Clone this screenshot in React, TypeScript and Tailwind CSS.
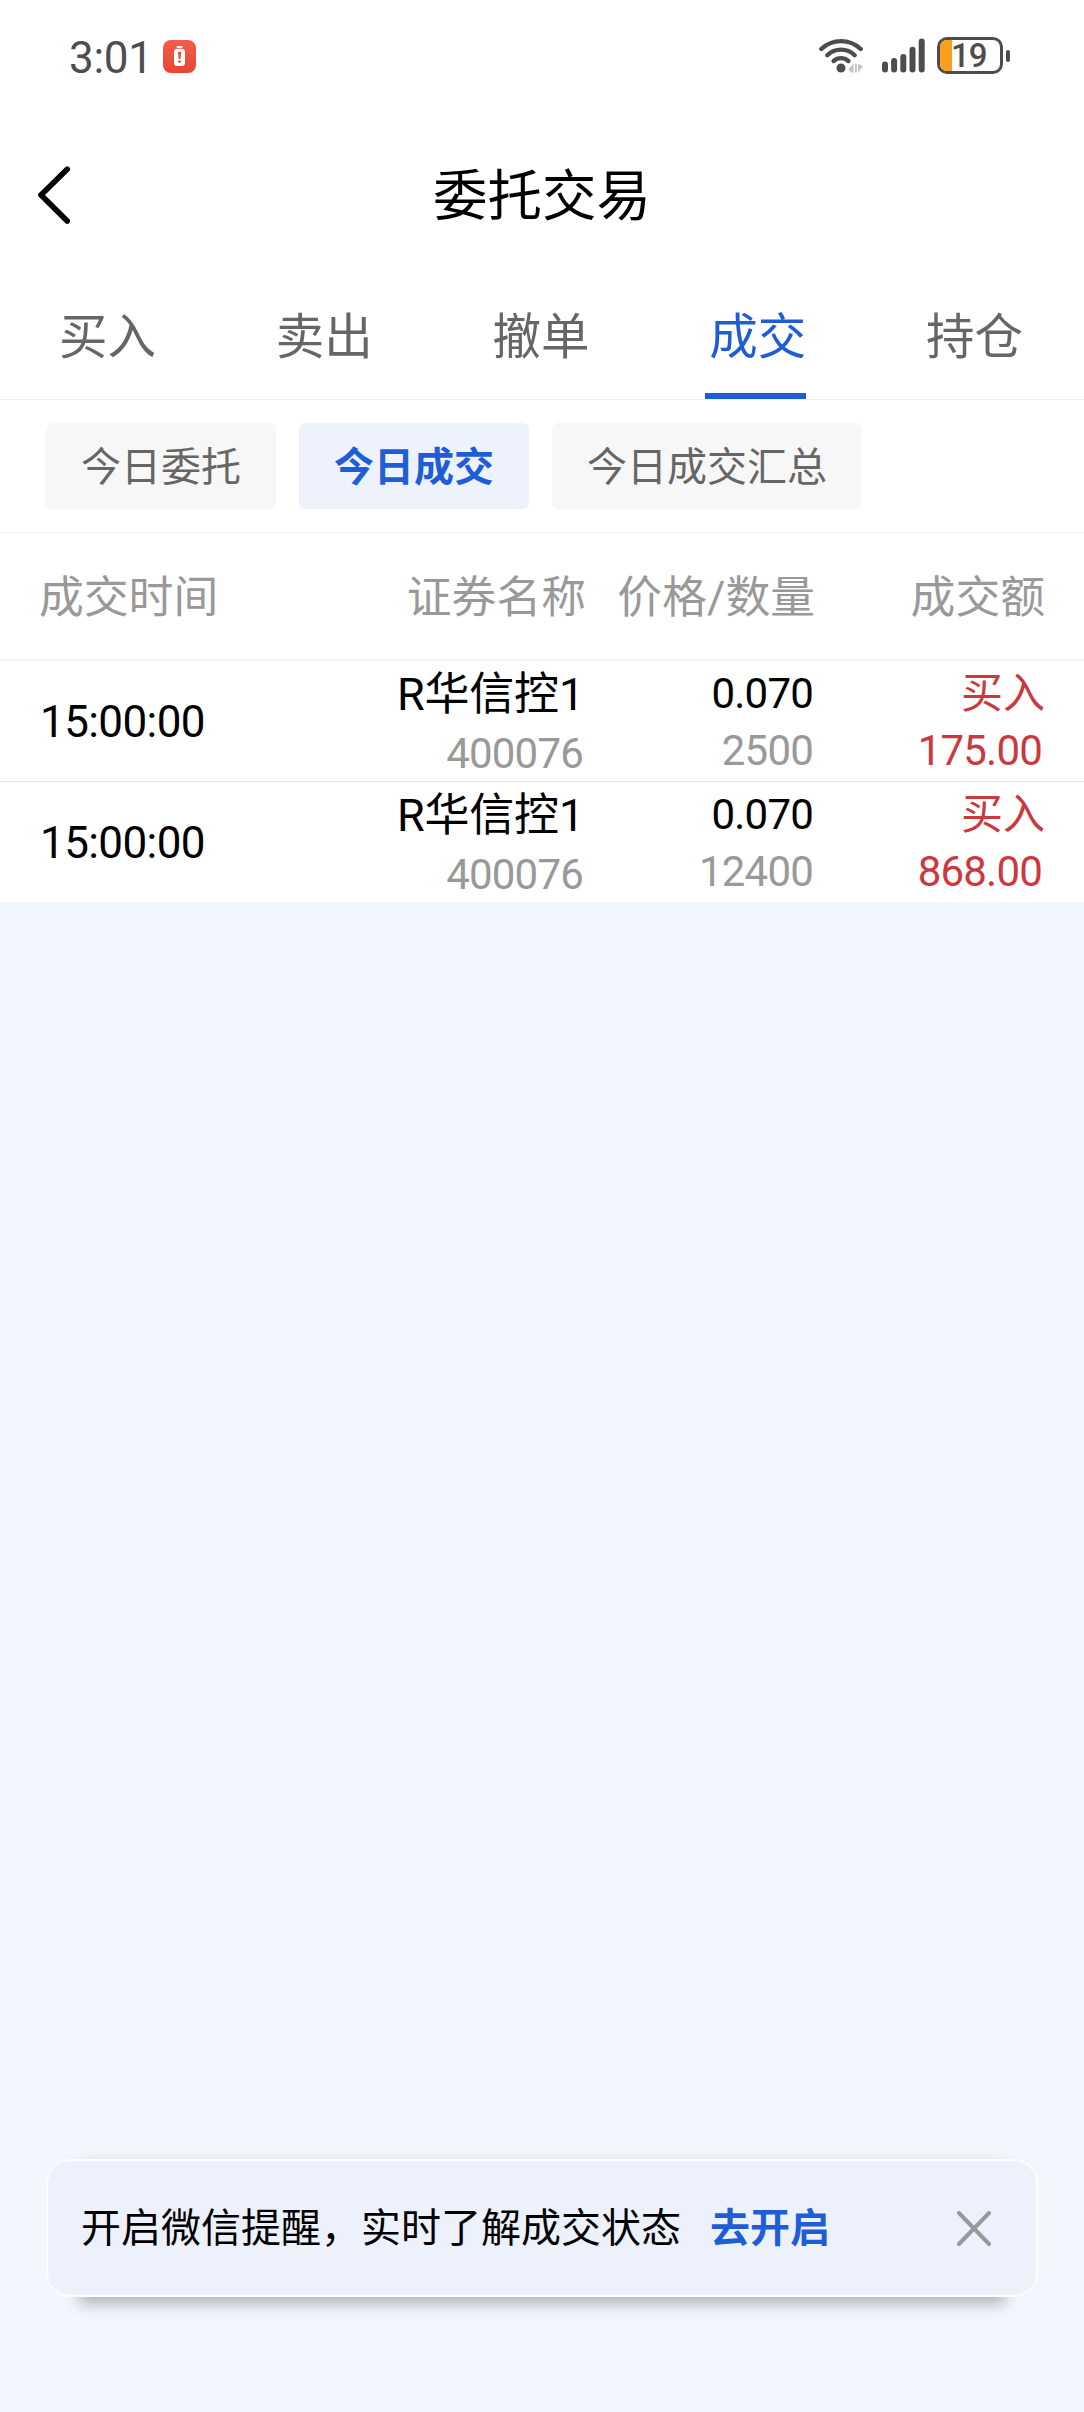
import { clsx } from "clsx";

const tabs = ["买入", "卖出", "撤单", "成交", "持仓"];
const filters = ["今日委托", "今日成交", "今日成交汇总"];

const deals = [
  { time: "15:00:00", name: "R华信控1", code: "400076", price: "0.070", amount: "2500", side: "买入", total: "175.00" },
  { time: "15:00:00", name: "R华信控1", code: "400076", price: "0.070", amount: "12400", side: "买入", total: "868.00" },
];

function StatusBar() {
  return (
    <div className="flex h-[112px] items-start justify-between pl-[69px] pr-[74px] pt-9 text-[#4d4d4d]">
      <div className="flex items-start">
        <span className="h-[44px] w-[94px] text-[44px] leading-[44px] tracking-[-0.3px]">3:01</span>
        <svg className="mt-1" width="33" height="33" viewBox="0 0 33 33">
          <defs>
            <linearGradient id="alert" x1="0" y1="0" x2="0" y2="1">
              <stop offset="0" stopColor="#f05f4c" />
              <stop offset="1" stopColor="#ea4430" />
            </linearGradient>
          </defs>
          <rect width="33" height="33" rx="8" fill="url(#alert)" />
          <rect x="13.8" y="6" width="5.6" height="2.2" rx="0.5" fill="#fff" />
          <rect x="11" y="9" width="11" height="17" rx="3" fill="#fff" />
          <path d="M15 12h3.2l-.7 7h-1.8z" fill="#ea4a36" />
          <circle cx="16.6" cy="21.6" r="1.4" fill="#ea4a36" />
        </svg>
      </div>

      <div className="flex items-start pt-px">
        {/* Wifi */}
        <svg width="45" height="37" viewBox="819 37 45 37" fill="none" stroke="#4d4d4d" strokeWidth="4.4" strokeLinecap="round">
          <path d="M821.3 49a28.5 28.5 0 0 1 39.4 0" />
          <path d="M827.3 55.2a19.5 19.5 0 0 1 27.4 0" />
          <path d="M833.6 61a11 11 0 0 1 14.8 0" />
          <circle cx="841" cy="68" r="4.5" fill="#4d4d4d" stroke="none" />
          <path d="M848.5 69l5-5.3v8.7h-2.4zM855 63.7h1.9v8.7H855zM863 66.5l-5-2.8v8.7z" fill="#c4c4c4" stroke="none" />
        </svg>
        {/* Signal */}
        <svg className="ml-[18px]" width="43" height="37" viewBox="882 37 43 37" fill="#4d4d4d">
          <rect x="882" y="61.5" width="6" height="11" rx="3" />
          <rect x="891.1" y="58" width="6" height="14.5" rx="3" />
          <rect x="900.3" y="54" width="6" height="18.5" rx="3" />
          <rect x="909.5" y="46.8" width="6" height="25.7" rx="3" />
          <rect x="918.7" y="38.4" width="6" height="34.1" rx="3" />
        </svg>
        {/* Battery */}
        <div className="ml-[12px] flex items-center">
          <div className="flex h-[37px] w-[66px] overflow-hidden rounded-[10px] border-[3px] border-[#4d4d4d]">
            <div className="h-full w-[12px] bg-[#ff9d1e]" />
            <span className="-ml-px text-[33px] font-medium leading-[32px] tracking-[-1px]">19</span>
          </div>
          <div className="ml-[3px] h-[12px] w-[4px] rounded-[2px] bg-[#4d4d4d]" />
        </div>
      </div>
    </div>
  );
}

function TitleBar() {
  return (
    <header className="flex h-[168px] items-center justify-between px-[36px]">
      <svg className="mb-[2px]" width="36" height="58" viewBox="0 0 36 58" fill="none" stroke="#000" strokeWidth="5.6" strokeLinecap="round" strokeLinejoin="round">
        <path d="M31.2 3.2L5 29l26.2 26" />
      </svg>
      <h1 className="text-[54.5px] leading-[60px] text-black">委托交易</h1>
      <div className="w-[36px]" />
    </header>
  );
}

function Tabs({ active }: { active: string }) {
  return (
    <nav className="grid h-[120px] grid-cols-5 border-b border-[#eeeeee]">
      {tabs.map((tab) => (
        <button
          key={tab}
          className={clsx(
            "relative h-[119px] pb-[4px] pr-[2px] text-[48.5px] leading-[60px]",
            tab === active ? "text-[#1f5dd6]" : "text-[#666666]"
          )}
        >
          {tab}
          {tab === active && <span className="absolute bottom-0 left-[55px] h-[6px] w-[101px] bg-[#1f5dd6]" />}
        </button>
      ))}
    </nav>
  );
}

function Filters({ active }: { active: string }) {
  return (
    <div className="flex h-[133px] gap-[23px] border-b border-[#f2f2f2] pl-[46px] pt-[23px]">
      {filters.map((filter) => (
        <button
          key={filter}
          className={clsx(
            "h-[86px] rounded-md px-[35px] pt-[3px] text-[40px] leading-[60px]",
            filter === active ? "bg-[#edf2fd] font-bold text-[#1f5dd6]" : "bg-[#f7f7f7] text-[#666666]"
          )}
        >
          {filter}
        </button>
      ))}
    </div>
  );
}

function DealTable() {
  return (
    <section>
      <div className="grid h-[128px] grid-cols-[318px_229px_229px_230px] items-center whitespace-nowrap border-b-2 border-[#f2f2f2] px-[39px] pt-[3px] text-right text-[44.8px] leading-[60px] text-[#999999]">
        <span className="text-left">成交时间</span>
        <span>证券名称</span>
        <span>价格/数量</span>
        <span>成交额</span>
      </div>
      <div className="divide-y divide-[#e4e4e4]">
        {deals.map((deal) => (
          <div
            key={deal.amount}
            className="grid h-[120.5px] grid-cols-[318px_229px_229px_230px] whitespace-nowrap px-[39px] pt-[3px] text-right text-[42px] leading-[54px] tracking-[-0.8px] text-[#999999]"
          >
            <div className="pl-px pt-[29px] text-left text-[44px] leading-[58px] tracking-[-0.6px] text-black">{deal.time}</div>
            <div className="flex flex-col gap-[2px] pr-[2px]">
              <span className="pt-px text-[45px] leading-[60px] tracking-[-0.2px] text-black">{deal.name}</span>
              <span className="pr-px">{deal.code}</span>
            </div>
            <div className="flex flex-col pr-[2px]">
              <span className="leading-[60px] text-black">{deal.price}</span>
              <span>{deal.amount}</span>
            </div>
            <div className="flex flex-col text-[#cb393e]">
              <span className="leading-[60px] tracking-normal">{deal.side}</span>
              <span className="pr-[3px]">{deal.total}</span>
            </div>
          </div>
        ))}
      </div>
    </section>
  );
}

function NoticeBar() {
  return (
    <div className="relative mx-[46px] mb-[115px] h-[138px]">
      {/* Only the straight edges of the card cast a shadow */}
      <div className="absolute inset-x-[33px] inset-y-0 shadow-[0_7px_14px_rgba(0,0,0,0.27)]" />
      <div className="relative flex h-full items-center rounded-3xl border-2 border-[#fcfdff] bg-[#edf1fc] pl-[33px] pr-[45px] text-[40px] leading-[60px]">
        <span className="pt-[2px] text-black">开启微信提醒，实时了解成交状态</span>
        <button className="ml-[29px] pt-[2px] font-bold text-[#1f5dd6]">去开启</button>
        <svg className="ml-auto" width="34" height="35" viewBox="0 0 34 35" fill="none" stroke="#999999" strokeWidth="4" strokeLinecap="round">
          <path d="M2 2l30 31M32 2l-30 31" />
        </svg>
      </div>
    </div>
  );
}

export default function App() {
  return (
    <div className="flex h-[2412px] w-[1084px] flex-col justify-between overflow-hidden bg-[#f2f6fe] font-[Roboto,'Noto_Sans_CJK_SC',sans-serif]">
      <main className="bg-white">
        <StatusBar />
        <TitleBar />
        <Tabs active="成交" />
        <Filters active="今日成交" />
        <DealTable />
      </main>
      <NoticeBar />
    </div>
  );
}
